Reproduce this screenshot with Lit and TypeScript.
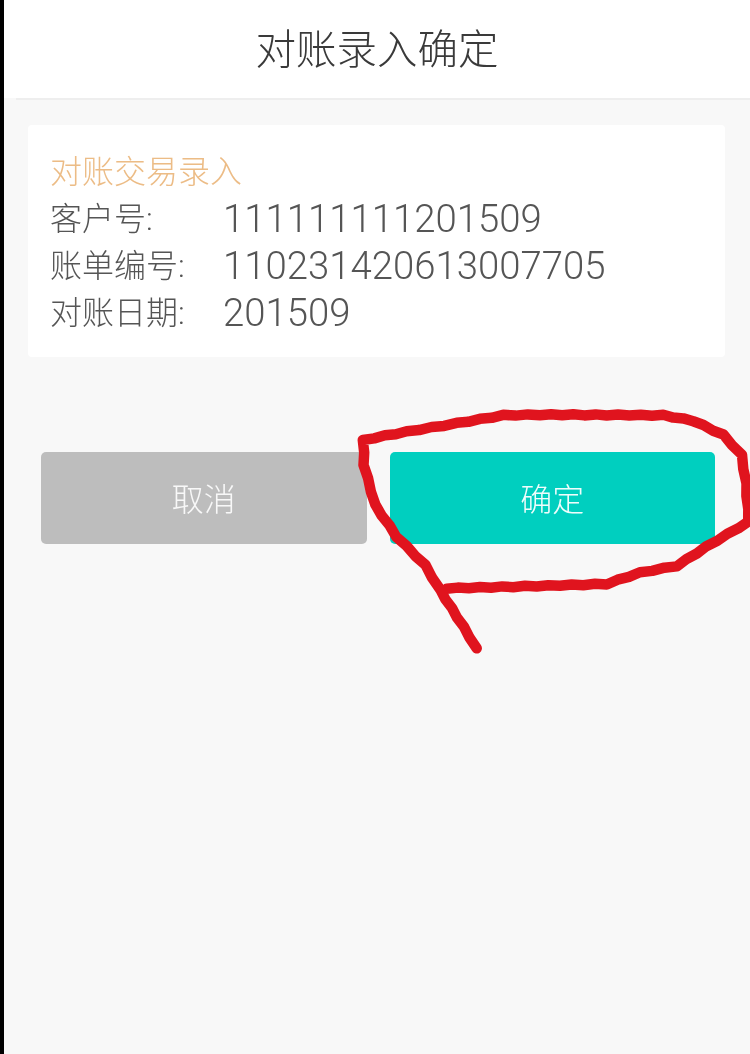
import { LitElement, html, css, svg } from "lit";
import { customElement } from "lit/decorators.js";

const rows = [
  ["客户号:", "111111111201509"],
  ["账单编号:", "110231420613007705"],
  ["对账日期:", "201509"],
];

const scribble: [number, number][] = [
  [410, 775], [370, 710], [300, 600], [255, 525], [170, 440], [105, 345], [72, 225], [70, 150],
  [200, 125], [350, 100], [490, 76], [600, 74], [800, 75], [970, 76], [1060, 92], [1150, 135],
  [1205, 195], [1218, 280], [1226, 395], [1100, 470], [1010, 528], [900, 548], [800, 582],
  [520, 590], [320, 595],
];

// Hand-drawn jitter: subdivide the stroke and nudge every other sample sideways.
function jitter(points: [number, number][]): string {
  const out: string[] = [];
  let n = 0;
  points.forEach(([x, y], i) => {
    const px = x / 3 + 340;
    const py = y / 3 + 390;
    if (i === 0) {
      out.push(`M${px.toFixed(1)} ${py.toFixed(1)}`);
      return;
    }
    const qx = points[i - 1][0] / 3 + 340;
    const qy = points[i - 1][1] / 3 + 390;
    const len = Math.hypot(px - qx, py - qy);
    const steps = Math.max(1, Math.round(len / 12));
    for (let s = 1; s <= steps; s++) {
      const t = s / steps;
      const d = n++ % 2 ? 0.5 : -0.5;
      const nx = (-(py - qy) / len) * d;
      const ny = ((px - qx) / len) * d;
      out.push(`L${(qx + (px - qx) * t + nx).toFixed(1)} ${(qy + (py - qy) * t + ny).toFixed(1)}`);
    }
  });
  return out.join(" ");
}
const scribblePath = jitter(scribble);

@customElement("app-root")
export class AppRoot extends LitElement {
  static styles = css`
    :host {
      display: block;
      position: relative;
      height: 1054px;
      overflow: hidden;
      background: #f8f8f8;
      border-left: 4px solid #000;
      box-sizing: border-box;
      font-family: Roboto, "Noto Sans CJK SC", sans-serif;
      font-weight: 300;
      color: #555;
    }
    .page {
      filter: blur(0.65px);
      height: 100%;
      display: flex;
      flex-direction: column;
    }
    .header {
      height: 92px;
      padding-bottom: 6px;
      background: #fff;
      display: flex;
      align-items: center;
      justify-content: center;
      font-size: 40.5px;
      color: #3a3a3a;
      flex: none;
    }
    .rule {
      height: 2px;
      margin-left: 12px;
      background: #eeeeee;
      flex: none;
    }
    .card {
      margin: 25px 25px 0 24px;
      padding: 23px 23px 21px 22px;
      background: #fff;
      border-radius: 4px;
      font-size: 32px;
    }
    .line {
      height: 47px;
      display: flex;
      align-items: center;
    }
    .title {
      color: #ecbc86;
      padding-bottom: 5px;
      height: 42px;
    }
    .label {
      width: 173px;
      flex: none;
      color: #555;
      padding-bottom: 6px;
    }
    .value {
      font-size: 38.3px;
      color: #555;
    }
    .actions {
      display: flex;
      gap: 23px;
      margin: 95px 35px 0 37px;
    }
    .btn {
      flex: 1;
      height: 92px;
      border-radius: 5px;
      display: flex;
      align-items: center;
      justify-content: center;
      font-size: 32px;
      color: #f8f8f8;
      padding-bottom: 2px;
      box-sizing: border-box;
    }
    .cancel {
      background: #bdbdbd;
    }
    .ok {
      background: #00cfbf;
      color: #effdfc;
    }
    .mark {
      position: absolute;
      left: -4px;
      top: 0;
      width: 750px;
      height: 1054px;
      pointer-events: none;
      filter: blur(0.5px);
    }
  `;

  render() {
    return html`
      <div class="page">
        <div class="header">对账录入确定</div>
        <div class="rule"></div>
        <div class="card">
          <div class="line title">对账交易录入</div>
          ${rows.map(
            ([k, v]) => html`<div class="line"><span class="label">${k}</span><span class="value">${v}</span></div>`
          )}
        </div>
        <div class="actions">
          <div class="btn cancel">取消</div>
          <div class="btn ok">确定</div>
        </div>
      </div>
      <svg class="mark" viewBox="0 0 750 1054">
        ${svg`<path d=${scribblePath} fill="none" stroke="#e0141e" stroke-width="10.5" stroke-linejoin="round" stroke-linecap="round"></path>`}
      </svg>
    `;
  }
}
